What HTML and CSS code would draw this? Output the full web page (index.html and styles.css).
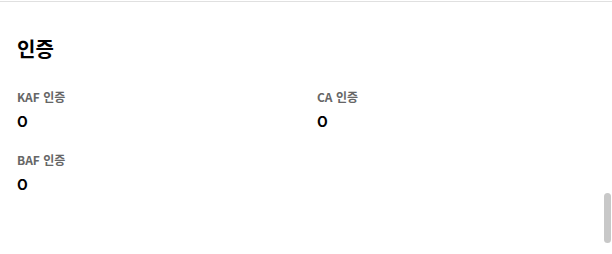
FILE: index.html
```html
<!DOCTYPE html>
<html lang="ko">
<head>
<meta charset="utf-8">
<link rel="stylesheet" href="styles.css">
</head>
<body>
<div class="topline"></div>
<section class="cert">
  <h2 class="cert-title">인증</h2>
  <div class="cert-grid">
    <div class="item">
      <div class="label">KAF 인증</div>
      <div class="value">O</div>
    </div>
    <div class="item">
      <div class="label">CA 인증</div>
      <div class="value">O</div>
    </div>
    <div class="item">
      <div class="label">BAF 인증</div>
      <div class="value">O</div>
    </div>
  </div>
</section>
<div class="scroll-thumb"></div>
</body>
</html>
```
FILE: styles.css
```css
html, body {
  margin: 0;
  padding: 0;
  background: #ffffff;
  height: 100%;
  overflow: hidden;
}
body {
  font-family: "Noto Sans CJK KR", "Noto Sans", sans-serif;
  color: #000;
}
.topline {
  margin-top: 1px;
  height: 1px;
  background: #e0e0e0;
}
.cert {
  padding: 0 17px;
}
.cert-title {
  margin: 0;
  padding-top: 33px;
  font-size: 20px;
  line-height: 28px;
  font-weight: 700;
}
.cert-grid {
  margin-top: 25px;
  display: grid;
  grid-template-columns: 300px 300px;
  row-gap: 20px;
}
.label {
  font-size: 12px;
  line-height: 18px;
  font-weight: 700;
  color: #666666;
}
.value {
  margin-top: 5px;
  font-size: 14px;
  line-height: 20px;
  font-weight: 700;
  color: #000;
}
.scroll-thumb {
  position: absolute;
  left: 604px;
  top: 193px;
  width: 7px;
  height: 50px;
  border-radius: 4px;
  background: #c8c8c8;
}
```
